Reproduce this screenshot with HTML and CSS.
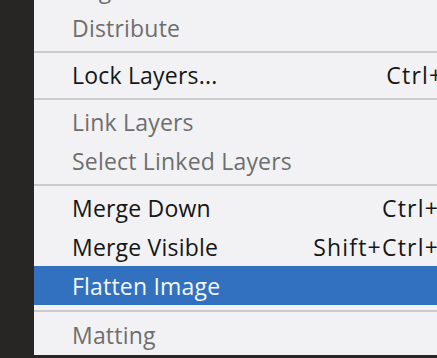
FILE: index.html
```html
<!DOCTYPE html>
<html lang="en">
<head>
    <meta charset="UTF-8">
    <meta name="viewport" content="width=device-width, initial-scale=1.0">
    <title>Layer menu</title>
    <link rel="stylesheet" href="styles.css">
</head>
<body>
    <div class="menu">
        <div class="item disabled"><span class="label">Align</span></div>
        <div class="item disabled"><span class="label">Distribute</span></div>
        <div class="separator"></div>
        <div class="item"><span class="label">Lock Layers...</span><span class="shortcut">Ctrl+/</span></div>
        <div class="separator"></div>
        <div class="item disabled"><span class="label">Link Layers</span></div>
        <div class="item disabled"><span class="label">Select Linked Layers</span></div>
        <div class="separator"></div>
        <div class="item"><span class="label">Merge Down</span><span class="shortcut">Ctrl+E</span></div>
        <div class="item"><span class="label">Merge Visible</span><span class="shortcut">Shift+Ctrl+E</span></div>
        <div class="item active"><span class="label">Flatten Image</span></div>
        <div class="separator last"></div>
        <div class="item disabled"><span class="label">Matting</span></div>
    </div>
</body>
</html>
```

FILE: styles.css
```css
html, body {
    height: 100%;
    overflow: hidden;
}
body {
    margin: 0;
    background-color: #282624;
    font-family: "Open Sans", "Noto Sans", sans-serif;
    font-size: 23px;
}
.menu {
    width: 442px;
    margin-left: 34px;
    margin-top: -31px;
    padding-bottom: 1px;
    background-color: #f2f2f4;
}
.item {
    height: 39px;
    display: flex;
    align-items: center;
    justify-content: space-between;
    padding: 0 23px 0 38px;
    color: #161616;
    white-space: nowrap;
}
.label {
    letter-spacing: 0.2px;
}
.shortcut {
    letter-spacing: 1.2px;
}
.item.disabled {
    color: #6e6e6e;
}
.item.active {
    background-color: #3271c0;
    color: #f4f7fc;
}
.separator {
    height: 8px;
    display: flex;
    align-items: center;
}
.separator.last {
    height: 10px;
}
.separator::after {
    content: "";
    flex: 1;
    height: 2px;
    margin-top: 1px;
    background-color: #cbcbcd;
}
```
